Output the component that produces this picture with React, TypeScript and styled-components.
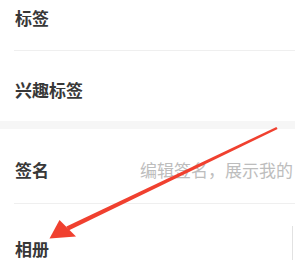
import React from "react";
import styled, { createGlobalStyle } from "styled-components";

const Global = createGlobalStyle`
  html, body { margin: 0; padding: 0; background: #ffffff; overflow: hidden; }
  body { font-family: "Noto Sans CJK SC", "Noto Sans", sans-serif; }
`;

const Page = styled.div`
  position: relative;
  width: 295px;
  height: 260px;
  overflow: hidden;
  background: #ffffff;
`;

const Section = styled.div<{ $offset?: number }>`
  display: flex;
  flex-direction: column;
  background: #ffffff;
  margin-top: ${(p) => p.$offset ?? 0}px;
`;

const Gap = styled.div`
  height: 8px;
  background: #f6f6f6;
`;

const Row = styled.div<{ $top: number; $bottom: number }>`
  display: flex;
  align-items: center;
  padding: ${(p) => p.$top}px 0 ${(p) => p.$bottom}px 15px;
`;

const Divider = styled.div`
  height: 1px;
  margin-left: 14px;
  background: #efefef;
`;

const Label = styled.span`
  width: 125px;
  flex-shrink: 0;
  font-size: 17px;
  line-height: 20px;
  font-weight: 700;
  color: #383838;
  white-space: nowrap;
`;

const Placeholder = styled.span`
  font-size: 17px;
  line-height: 20px;
  color: #bdbdbd;
  white-space: nowrap;
`;

const Thumb = styled.div`
  margin-left: auto;
  align-self: flex-start;
  margin-top: -6px;
  width: 2px;
  height: 40px;
  border-left: 1px solid #e2e2e2;
`;

const ArrowLayer = styled.svg`
  position: absolute;
  left: 0;
  top: 0;
  pointer-events: none;
`;

export default function App() {
  return (
    <>
      <Global />
      <Page>
        <Section $offset={-20}>
          <Row $top={28} $bottom={22}>
            <Label>标签</Label>
          </Row>
          <Divider />
          <Row $top={29} $bottom={21}>
            <Label>兴趣标签</Label>
          </Row>
        </Section>
        <Gap />
        <Section>
          <Row $top={31} $bottom={23}>
            <Label>签名</Label>
            <Placeholder>编辑签名，展示我的</Placeholder>
          </Row>
          <Divider />
          <Row $top={28} $bottom={20}>
            <Label>相册</Label>
            <Thumb />
          </Row>
        </Section>
        <ArrowLayer width="295" height="260" viewBox="0 0 295 260">
          <polygon
            points="277.6,129.1 276.4,126.9 66.4,226.4 68.6,230.6"
            fill="#f0402f"
          />
          <polygon points="49.5,238.5 59.5,220 76,236.5" fill="#f0402f" />
        </ArrowLayer>
      </Page>
    </>
  );
}
